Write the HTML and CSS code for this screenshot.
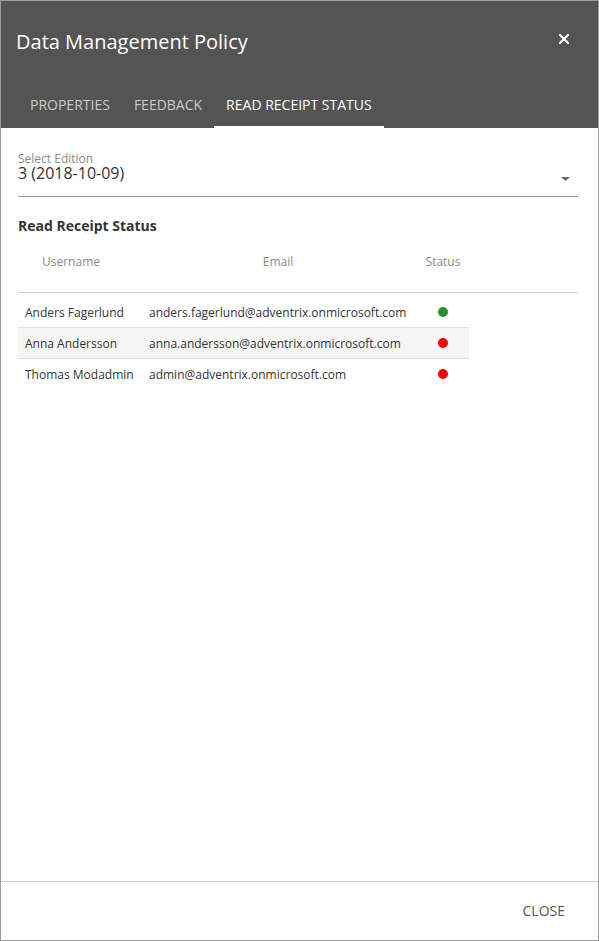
FILE: index.html
```html
<!DOCTYPE html>
<html lang="en">
<head>
<meta charset="utf-8">
<title>Data Management Policy</title>
<link rel="stylesheet" href="styles.css">
</head>
<body>
<div class="dialog">
  <div class="header">
    <div class="title-row">
      <h1 class="title">Data Management Policy</h1>
      <svg class="close-x" width="10" height="10" viewBox="0 0 10 10"><path d="M1 1 L9 9 M9 1 L1 9" stroke="#fff" stroke-width="2" stroke-linecap="square"/></svg>
    </div>
    <div class="tabs">
      <div class="tab">Properties</div>
      <div class="tab">Feedback</div>
      <div class="tab active">Read Receipt Status</div>
    </div>
  </div>
  <div class="body">
    <div class="select">
      <div class="select-label">Select Edition</div>
      <div class="select-value">
        <span>3 (2018-10-09)</span>
        <svg class="caret" width="9" height="4" viewBox="0 0 9 4"><path d="M0 0 H9 L4.5 4 Z" fill="#666"/></svg>
      </div>
    </div>
    <h2 class="section-title">Read Receipt Status</h2>
    <div class="table-head">
      <div class="th">Username</div>
      <div class="th">Email</div>
      <div class="th">Status</div>
    </div>
    <div class="rows">
      <div class="row">
        <div class="td">Anders Fagerlund</div>
        <div class="td">anders.fagerlund@adventrix.onmicrosoft.com</div>
        <div class="td"><span class="dot green"></span></div>
      </div>
      <div class="row alt">
        <div class="td">Anna Andersson</div>
        <div class="td">anna.andersson@adventrix.onmicrosoft.com</div>
        <div class="td"><span class="dot red"></span></div>
      </div>
      <div class="row">
        <div class="td">Thomas Modadmin</div>
        <div class="td">admin@adventrix.onmicrosoft.com</div>
        <div class="td"><span class="dot red"></span></div>
      </div>
    </div>
  </div>
  <div class="footer">
    <div class="close-btn">CLOSE</div>
  </div>
</div>
</body>
</html>
```
FILE: styles.css
```css
html, body {
  margin: 0;
  padding: 0;
  background: #fff;
}
body {
  font-family: "Open Sans", "Noto Sans", sans-serif;
  color: #333;
}
.dialog {
  width: 599px;
  height: 941px;
  box-sizing: border-box;
  border: 1px solid #9c9c9c;
  display: flex;
  flex-direction: column;
}
.header {
  background: #545454;
  height: 127px;
  display: flex;
  flex-direction: column;
}
.title-row {
  display: flex;
  justify-content: space-between;
  align-items: flex-start;
  padding: 29px 29px 0 15px;
}
.title {
  margin: 0;
  font-size: 20px;
  line-height: 24px;
  font-weight: 400;
  color: #fff;
}
.close-x {
  margin-top: 4px;
}
.tabs {
  margin-top: auto;
  display: flex;
  padding-left: 17px;
}
.tab {
  padding: 0 12px 11px;
  line-height: 20px;
  font-size: 14px;
  text-transform: uppercase;
  color: #c9c9c9;
  border-bottom: 2px solid transparent;
}
.tab.active {
  color: #fff;
  border-bottom-color: #fff;
}
.body {
  flex: 1;
  padding: 0 20px 0 17px;
}
.select {
  margin-top: 24px;
}
.select-label {
  font-size: 12px;
  line-height: 13px;
  color: #8a8a8a;
}
.select-value {
  display: flex;
  justify-content: space-between;
  align-items: flex-end;
  font-size: 16px;
  line-height: 16px;
  color: #333;
  padding-bottom: 15px;
  border-bottom: 1px solid #999;
}
.caret {
  margin-right: 8px;
}
.section-title {
  margin: 19px 0 0;
  font-size: 14px;
  line-height: 20px;
  font-weight: 700;
  color: #333;
}
.table-head {
  margin-top: 18px;
  display: grid;
  grid-template-columns: 106px 308px 22px;
  padding-bottom: 22px;
  border-bottom: 1px solid #cfcfcf;
  font-size: 12px;
  line-height: 16px;
  color: #8a8a8a;
}
.th {
  display: flex;
  justify-content: center;
  white-space: nowrap;
}
.rows {
  margin-top: 4px;
  width: 451px;
}
.row {
  display: grid;
  grid-template-columns: 124px 290px 37px;
  height: 30px;
  align-items: center;
  font-size: 12px;
  color: #333;
  white-space: nowrap;
}
.row + .row {
  border-top: 1px solid #e2e2e2;
}
.row.alt {
  background: #f5f5f5;
}
.td {
  padding-left: 7px;
}
.td:last-child {
  padding-left: 6px;
  display: flex;
}
.dot {
  width: 10px;
  height: 10px;
  border-radius: 50%;
  display: block;
}
.dot.green { background: #2b8c2b; }
.dot.red { background: #ff0000; }
.footer {
  border-top: 1px solid #d0d0d0;
  height: 58px;
  display: flex;
  align-items: center;
  justify-content: flex-end;
  padding-right: 33px;
}
.close-btn {
  font-size: 14px;
  line-height: 20px;
  color: #555;
}
```
